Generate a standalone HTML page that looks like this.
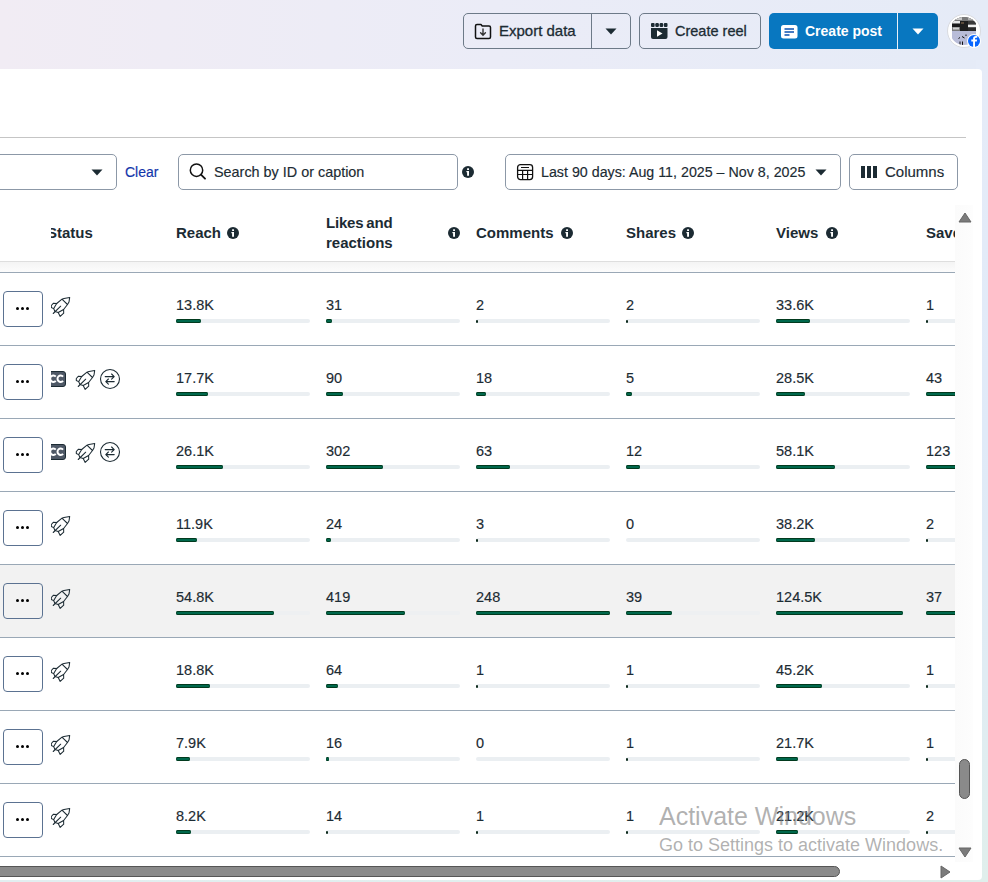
<!DOCTYPE html>
<html><head><meta charset="utf-8"><style>
*{box-sizing:border-box;margin:0;padding:0}
html,body{width:988px;height:882px;overflow:hidden}
body{position:relative;font-family:"Liberation Sans",sans-serif;color:#1c2b33;
background:linear-gradient(to right,#f1ecf4 0%,#ebecf7 50%,#e5ebf7 100%);}
.abs{position:absolute}
.ic{position:absolute;display:block}
.btn{position:absolute;top:13px;height:36px;border:1px solid #6d7a88;border-radius:5px;}
.btxt{position:absolute;font-size:14.5px;line-height:16px;white-space:nowrap}
.card{position:absolute;left:-20px;top:69px;width:1002px;height:811px;background:#fff;border-radius:4px;overflow:hidden}
.box{position:absolute;top:154px;height:36px;border:1px solid #8c98a7;border-radius:5px;background:#fff}
.ftxt{position:absolute;font-size:14px;line-height:16px;white-space:nowrap;-webkit-text-stroke:0.15px currentColor}
.hdr{position:absolute;font-size:15px;font-weight:700;line-height:20px;white-space:nowrap}
.tbl{position:absolute;left:0;top:195px;width:955px;height:667px;overflow:hidden}
.rowbg{position:absolute;left:0;width:955px;height:72px}
.hline{position:absolute;left:0;width:955px;height:1px;background:#9aa8b6}
.num{position:absolute;font-size:14.5px;line-height:16px;white-space:nowrap;-webkit-text-stroke:0.15px #1c2b33}
.trk{position:absolute;width:134px;height:4px;border-radius:2px;background:#ebeff2}
.hl .trk{background:#eceef0}
.fill{position:absolute;height:4px;border-radius:2px;background:#00684c;box-shadow:inset 0 1px 0 #023a1e,inset 0 -1px 0 #023a1e}
.stk{position:absolute;left:0;width:51px;height:72px;background:#fff}
.more{position:absolute;left:3px;width:40px;height:36px;border:1px solid #5b7291;border-radius:4px;}
.more i{position:absolute;top:15.4px;width:3.1px;height:3.1px;border-radius:50%;background:#000}
.more i:nth-child(1){left:12.4px}.more i:nth-child(2){left:17.4px}.more i:nth-child(3){left:22.4px}
.wm{position:absolute;color:rgba(125,125,125,0.6);white-space:nowrap}
</style></head><body>

<!-- top buttons -->
<div class="btn" style="left:463px;width:168px"></div>
<div class="abs" style="left:591px;top:13px;width:1px;height:36px;background:#6d7a88"></div>
<svg class="ic" width="18" height="17" viewBox="0 0 18 17" style="left:474px;top:23px"><path d="M1.5,3 Q1.5,1.5 3,1.5 H7 L8.2,3 H15 Q16.5,3 16.5,4.5 V14 Q16.5,15.5 15,15.5 H3 Q1.5,15.5 1.5,14 Z" fill="none" stroke="#111" stroke-width="1.5" stroke-linejoin="round"/><path d="M9,6 V12 M6.6,9.8 L9,12.2 L11.4,9.8" fill="none" stroke="#333" stroke-width="1.4" stroke-linecap="round"/></svg>
<div class="btxt" style="left:499px;top:23px;font-size:15px;-webkit-text-stroke:0.3px #1c2b33">Export data</div>
<svg class="ic" width="12" height="7" viewBox="0 0 12 7" style="left:605px;top:28px"><path d="M0.5,0.5 H11.5 L6,6.5 Z" fill="#1c2b33"/></svg>

<div class="btn" style="left:639px;width:122px"></div>
<svg class="ic" width="17" height="17" viewBox="0 0 17 17" style="left:651px;top:22px"><rect x="0" y="1" width="3.6" height="3.9" rx="1" fill="#1c2b33"/><rect x="4.3" y="1" width="3.6" height="3.9" rx="1.2" fill="#1c2b33"/><rect x="8.6" y="1" width="3.6" height="3.9" rx="1.2" fill="#1c2b33"/><rect x="12.9" y="1" width="3.6" height="3.9" rx="1" fill="#1c2b33"/><path d="M0,6 H16.5 V15 Q16.5,17 14.5,17 H2 Q0,17 0,15 Z" fill="#1c2b33"/><path d="M6,8.2 L11.5,11.5 L6,14.8 Z" fill="#fff"/></svg>
<div class="btxt" style="left:675px;top:23px;-webkit-text-stroke:0.3px #1c2b33">Create reel</div>

<div class="abs" style="left:769px;top:13px;width:169px;height:36px;background:#0877c0;border-radius:5px"></div>
<div class="abs" style="left:897px;top:13px;width:1px;height:36px;background:#e8f0f8"></div>
<svg class="ic" width="17" height="14" viewBox="0 0 17 14" style="left:781px;top:24.5px"><rect x="0" y="0" width="16.5" height="13.5" rx="2.5" fill="#fff"/><path d="M3.5,4 H13 M3.5,7 H13 M3.5,10 H8.5" stroke="#0a50b0" stroke-width="1.3"/></svg>
<div class="btxt" style="left:805px;top:23px;color:#fff;font-weight:700;font-size:14px">Create post</div>
<svg class="ic" width="12" height="7" viewBox="0 0 12 7" style="left:912px;top:28px"><path d="M0.5,0.5 H11.5 L6,6.5 Z" fill="#fff"/></svg>

<!-- avatar -->
<svg class="ic" width="36" height="36" viewBox="0 0 36 36" style="left:946px;top:13px">
<defs><clipPath id="av"><circle cx="18" cy="18" r="14"/></clipPath></defs>
<circle cx="18" cy="18" r="16.5" fill="#fff" stroke="#d9dbe0" stroke-width="1"/>
<g clip-path="url(#av)">
<rect x="0" y="0" width="36" height="36" fill="#fff"/>
<rect x="6" y="4" width="24" height="14" fill="#6a6a6a"/>
<rect x="6" y="4" width="24" height="14" fill="#7a7a7a"/><rect x="6" y="8" width="8" height="2" fill="#e8e8e8"/><rect x="6" y="11" width="8" height="3" fill="#1a1a1a"/><rect x="7" y="14.5" width="6" height="2" fill="#d0d0d0"/><rect x="14" y="8" width="8" height="10" fill="#1e1e1e"/><rect x="15" y="9" width="3" height="2" fill="#5a4a3a"/><rect x="22" y="4" width="8" height="3" fill="#b0b0b0"/><rect x="22" y="8" width="8" height="3" fill="#3a3a3a"/><rect x="22" y="12" width="8" height="2" fill="#f0f0f0"/><rect x="22" y="14.5" width="8" height="3.5" fill="#2a2a2a"/><rect x="10" y="4" width="6" height="3" fill="#c8c8c8"/>
<rect x="6" y="18" width="24" height="16" fill="#b8bcd8"/>
<path d="M12.5,25.5 l1.5,-1 M16,23.5 l2.5,1.5 M20,21.5 v1.5 M14,28.5 v3.5 M16.5,28.5 v3.5 M12,33 h1 M20,33 h1" stroke="#111" stroke-width="1"/>
</g>
<circle cx="28" cy="28" r="7" fill="#fff"/>
<circle cx="28" cy="28" r="6" fill="#0866ff"/>
<path d="M29,34 V28.5 H30.8 L31.1,26.6 H29 V25.6 Q29,24.8 30,24.8 H31.2 V23.1 Q30.5,23 29.7,23 Q27.1,23 27.1,25.5 V26.6 H25.3 V28.5 H27.1 V34 Z" fill="#fff"/>
</svg>

<!-- card -->
<div class="abs" style="left:976px;top:60px;width:12px;height:822px;background:linear-gradient(to bottom,#e6ecf8 0%,#e0eaf8 45%,#e0ecf3 75%,#e0efec 100%)"></div>
<div class="abs" style="left:0;top:876px;width:988px;height:6px;background:linear-gradient(to right,#e2eef0,#e0efec)"></div>
<div class="card"></div>
<div class="abs" style="left:0;top:137px;width:966px;height:1px;background:#c5c5c5"></div>

<!-- filter row -->
<div class="box" style="left:-10px;width:127px"></div>
<svg class="ic" width="12" height="7" viewBox="0 0 12 7" style="left:91px;top:169px"><path d="M0.5,0.5 H11.5 L6,6.5 Z" fill="#1c2b33"/></svg>
<div class="ftxt" style="left:125px;top:164px;color:#1236aa">Clear</div>
<div class="box" style="left:178px;width:280px"></div>
<svg class="ic" width="18" height="18" viewBox="0 0 18 18" style="left:188px;top:162px"><circle cx="8.5" cy="8.2" r="6.2" fill="none" stroke="#111" stroke-width="1.5"/><path d="M13,12.7 L17,16.7" stroke="#111" stroke-width="1.8" stroke-linecap="round"/></svg>
<div class="ftxt" style="left:214px;top:164px;font-size:14.4px">Search by ID or caption</div>
<svg class="ic" width="12" height="12" viewBox="0 0 12 12" style="left:462px;top:166px"><circle cx="6" cy="6" r="6" fill="#1c2b33"/><rect x="5.1" y="2.3" width="1.9" height="1.7" fill="#fff"/><path d="M4.4,5 H7 V9.7 H5.1 V6.3 H4.4 Z" fill="#fff"/></svg>
<div class="box" style="left:505px;width:336px"></div>
<svg class="ic" width="18" height="18" viewBox="0 0 18 18" style="left:516px;top:163px"><rect x="1.6" y="1.6" width="15" height="15" rx="2.8" fill="none" stroke="#111" stroke-width="1.3"/><path d="M1.6,7.3 H16.6 M1.6,11.5 H16.6 M6.6,7.3 V16.6 M11.6,7.3 V16.6 M5,4.5 H13" stroke="#111" stroke-width="1.2"/></svg>
<div class="ftxt" style="left:541px;top:164px;font-size:14.25px">Last 90 days: Aug 11, 2025 – Nov 8, 2025</div>
<svg class="ic" width="12" height="7" viewBox="0 0 12 7" style="left:815px;top:169px"><path d="M0.5,0.5 H11.5 L6,6.5 Z" fill="#1c2b33"/></svg>
<div class="box" style="left:849px;width:109px"></div>
<div class="abs" style="left:861px;top:166px;width:4px;height:12px;background:#1c2b33"></div>
<div class="abs" style="left:867px;top:166px;width:4px;height:12px;background:#1c2b33"></div>
<div class="abs" style="left:873px;top:166px;width:4px;height:12px;background:#1c2b33"></div>
<div class="ftxt" style="left:885px;top:164px;font-size:15px">Columns</div>

<!-- table -->
<div class="abs" style="left:0;top:195px;width:955px;height:667px;overflow:hidden">
 <div style="position:absolute;left:0;top:-195px;width:955px;height:882px">
 <div class="hdr" style="left:47px;top:223px">Status</div><div class="abs" style="left:0;top:200px;width:51px;height:61px;background:#fff"></div>
 <div class="hdr" style="left:176px;top:223px">Reach</div><svg class="ic" width="12" height="12" viewBox="0 0 12 12" style="left:227px;top:227px"><circle cx="6" cy="6" r="6" fill="#1c2b33"/><rect x="5.1" y="2.3" width="1.9" height="1.7" fill="#fff"/><path d="M4.4,5 H7 V9.7 H5.1 V6.3 H4.4 Z" fill="#fff"/></svg>
 <div class="hdr" style="left:326px;top:213px;word-spacing:-1px;letter-spacing:-0.2px">Likes and</div>
 <div class="hdr" style="left:326px;top:233px">reactions</div><svg class="ic" width="12" height="12" viewBox="0 0 12 12" style="left:448px;top:227px"><circle cx="6" cy="6" r="6" fill="#1c2b33"/><rect x="5.1" y="2.3" width="1.9" height="1.7" fill="#fff"/><path d="M4.4,5 H7 V9.7 H5.1 V6.3 H4.4 Z" fill="#fff"/></svg>
 <div class="hdr" style="left:476px;top:223px">Comments</div><svg class="ic" width="12" height="12" viewBox="0 0 12 12" style="left:561px;top:227px"><circle cx="6" cy="6" r="6" fill="#1c2b33"/><rect x="5.1" y="2.3" width="1.9" height="1.7" fill="#fff"/><path d="M4.4,5 H7 V9.7 H5.1 V6.3 H4.4 Z" fill="#fff"/></svg>
 <div class="hdr" style="left:626px;top:223px">Shares</div><svg class="ic" width="12" height="12" viewBox="0 0 12 12" style="left:682px;top:227px"><circle cx="6" cy="6" r="6" fill="#1c2b33"/><rect x="5.1" y="2.3" width="1.9" height="1.7" fill="#fff"/><path d="M4.4,5 H7 V9.7 H5.1 V6.3 H4.4 Z" fill="#fff"/></svg>
 <div class="hdr" style="left:776px;top:223px">Views</div><svg class="ic" width="12" height="12" viewBox="0 0 12 12" style="left:826px;top:227px"><circle cx="6" cy="6" r="6" fill="#1c2b33"/><rect x="5.1" y="2.3" width="1.9" height="1.7" fill="#fff"/><path d="M4.4,5 H7 V9.7 H5.1 V6.3 H4.4 Z" fill="#fff"/></svg>
 <div class="hdr" style="left:926px;top:223px">Saves</div>
 <div class="abs" style="left:0;top:261px;width:955px;height:1px;background:#dedede"></div>
 <div class="abs" style="left:0;top:262px;width:955px;height:10px;background:linear-gradient(#f4f4f4,#fcfcfc)"></div>
 <div class="hline" style="top:272px"></div>
 <div class="rowbg" style="top:273px;"></div>
<div class="hline" style="top:345px"></div>
<svg class="ic" width="22" height="22" viewBox="0 0 22 22" style="left:50px;top:296px"><g fill="none" stroke="#1c2b33" stroke-width="1.05" stroke-linejoin="round" stroke-linecap="round"><path d="M19.7,1.4 L14,2.4 L12,3.2 L6.7,7.5 L3.5,7.2 L1.3,9.5 L1.3,11.5 L3.6,12.6 L5,15.5 L8.2,16.5 L10.2,20.4 L13.7,17.2 L13.6,13.5 L17.5,8.5 L19,6 Z"/><path d="M12.2,3.4 L17.5,8.5 M6.7,7.5 L3.7,12.5 M8.2,16.5 L13.6,13.5 M10.7,10.2 L3.2,17.5"/></g></svg>
<div class="num" style="left:176px;top:297px">13.8K</div>
<div class="trk" style="left:176px;top:319px;"></div><div class="fill" style="left:176px;top:319px;width:24.7px"></div>
<div class="num" style="left:326px;top:297px">31</div>
<div class="trk" style="left:326px;top:319px;"></div><div class="fill" style="left:326px;top:319px;width:5.8px"></div>
<div class="num" style="left:476px;top:297px">2</div>
<div class="trk" style="left:476px;top:319px;"></div><div class="abs" style="left:476px;top:319.5px;width:1.8px;height:3px;border-radius:1px;background:#0d2a1c"></div>
<div class="num" style="left:626px;top:297px">2</div>
<div class="trk" style="left:626px;top:319px;"></div><div class="abs" style="left:626px;top:319.5px;width:1.8px;height:3px;border-radius:1px;background:#0d2a1c"></div>
<div class="num" style="left:776px;top:297px">33.6K</div>
<div class="trk" style="left:776px;top:319px;"></div><div class="fill" style="left:776px;top:319px;width:34.3px"></div>
<div class="num" style="left:926px;top:297px">1</div>
<div class="trk" style="left:926px;top:319px;"></div><div class="abs" style="left:926px;top:319.5px;width:1.8px;height:3px;border-radius:1px;background:#0d2a1c"></div>
<div class="rowbg" style="top:346px;"></div>
<div class="hline" style="top:418px"></div>
<svg class="ic" width="20" height="16" viewBox="0 0 20 16" style="left:46px;top:371px"><rect x="0.5" y="0.5" width="19" height="15" rx="2.5" fill="#4e5866" stroke="#1c2b33" stroke-width="1"/><path d="M9.78,5.56 A3.2,3.2 0 1 0 9.78,9.84 M17.08,5.56 A3.2,3.2 0 1 0 17.08,9.84" fill="none" stroke="#fff" stroke-width="2"/></svg>
<svg class="ic" width="22" height="22" viewBox="0 0 22 22" style="left:75px;top:369px"><g fill="none" stroke="#1c2b33" stroke-width="1.05" stroke-linejoin="round" stroke-linecap="round"><path d="M19.7,1.4 L14,2.4 L12,3.2 L6.7,7.5 L3.5,7.2 L1.3,9.5 L1.3,11.5 L3.6,12.6 L5,15.5 L8.2,16.5 L10.2,20.4 L13.7,17.2 L13.6,13.5 L17.5,8.5 L19,6 Z"/><path d="M12.2,3.4 L17.5,8.5 M6.7,7.5 L3.7,12.5 M8.2,16.5 L13.6,13.5 M10.7,10.2 L3.2,17.5"/></g></svg>
<svg class="ic" width="22" height="22" viewBox="0 0 22 22" style="left:99px;top:368px"><circle cx="11" cy="11" r="9.5" fill="none" stroke="#1c2b33" stroke-width="1.1"/><path d="M6.2,8.6 H15.2 M12.6,6 L15.2,8.6 L12.6,11.2 M15.2,13.6 H6.8 M9.4,11 L6.8,13.6 L9.4,16.2" fill="none" stroke="#1c2b33" stroke-width="1.1" stroke-linecap="round" stroke-linejoin="round"/></svg>
<div class="num" style="left:176px;top:370px">17.7K</div>
<div class="trk" style="left:176px;top:392px;"></div><div class="fill" style="left:176px;top:392px;width:31.7px"></div>
<div class="num" style="left:326px;top:370px">90</div>
<div class="trk" style="left:326px;top:392px;"></div><div class="fill" style="left:326px;top:392px;width:17.0px"></div>
<div class="num" style="left:476px;top:370px">18</div>
<div class="trk" style="left:476px;top:392px;"></div><div class="fill" style="left:476px;top:392px;width:9.7px"></div>
<div class="num" style="left:626px;top:370px">5</div>
<div class="trk" style="left:626px;top:392px;"></div><div class="fill" style="left:626px;top:392px;width:5.9px"></div>
<div class="num" style="left:776px;top:370px">28.5K</div>
<div class="trk" style="left:776px;top:392px;"></div><div class="fill" style="left:776px;top:392px;width:29.1px"></div>
<div class="num" style="left:926px;top:370px">43</div>
<div class="trk" style="left:926px;top:392px;"></div><div class="fill" style="left:926px;top:392px;width:43.0px"></div>
<div class="rowbg" style="top:419px;"></div>
<div class="hline" style="top:491px"></div>
<svg class="ic" width="20" height="16" viewBox="0 0 20 16" style="left:46px;top:444px"><rect x="0.5" y="0.5" width="19" height="15" rx="2.5" fill="#4e5866" stroke="#1c2b33" stroke-width="1"/><path d="M9.78,5.56 A3.2,3.2 0 1 0 9.78,9.84 M17.08,5.56 A3.2,3.2 0 1 0 17.08,9.84" fill="none" stroke="#fff" stroke-width="2"/></svg>
<svg class="ic" width="22" height="22" viewBox="0 0 22 22" style="left:75px;top:442px"><g fill="none" stroke="#1c2b33" stroke-width="1.05" stroke-linejoin="round" stroke-linecap="round"><path d="M19.7,1.4 L14,2.4 L12,3.2 L6.7,7.5 L3.5,7.2 L1.3,9.5 L1.3,11.5 L3.6,12.6 L5,15.5 L8.2,16.5 L10.2,20.4 L13.7,17.2 L13.6,13.5 L17.5,8.5 L19,6 Z"/><path d="M12.2,3.4 L17.5,8.5 M6.7,7.5 L3.7,12.5 M8.2,16.5 L13.6,13.5 M10.7,10.2 L3.2,17.5"/></g></svg>
<svg class="ic" width="22" height="22" viewBox="0 0 22 22" style="left:99px;top:441px"><circle cx="11" cy="11" r="9.5" fill="none" stroke="#1c2b33" stroke-width="1.1"/><path d="M6.2,8.6 H15.2 M12.6,6 L15.2,8.6 L12.6,11.2 M15.2,13.6 H6.8 M9.4,11 L6.8,13.6 L9.4,16.2" fill="none" stroke="#1c2b33" stroke-width="1.1" stroke-linecap="round" stroke-linejoin="round"/></svg>
<div class="num" style="left:176px;top:443px">26.1K</div>
<div class="trk" style="left:176px;top:465px;"></div><div class="fill" style="left:176px;top:465px;width:46.7px"></div>
<div class="num" style="left:326px;top:443px">302</div>
<div class="trk" style="left:326px;top:465px;"></div><div class="fill" style="left:326px;top:465px;width:56.9px"></div>
<div class="num" style="left:476px;top:443px">63</div>
<div class="trk" style="left:476px;top:465px;"></div><div class="fill" style="left:476px;top:465px;width:34.0px"></div>
<div class="num" style="left:626px;top:443px">12</div>
<div class="trk" style="left:626px;top:465px;"></div><div class="fill" style="left:626px;top:465px;width:14.2px"></div>
<div class="num" style="left:776px;top:443px">58.1K</div>
<div class="trk" style="left:776px;top:465px;"></div><div class="fill" style="left:776px;top:465px;width:59.3px"></div>
<div class="num" style="left:926px;top:443px">123</div>
<div class="trk" style="left:926px;top:465px;"></div><div class="fill" style="left:926px;top:465px;width:123.0px"></div>
<div class="rowbg" style="top:492px;"></div>
<div class="hline" style="top:564px"></div>
<svg class="ic" width="22" height="22" viewBox="0 0 22 22" style="left:50px;top:515px"><g fill="none" stroke="#1c2b33" stroke-width="1.05" stroke-linejoin="round" stroke-linecap="round"><path d="M19.7,1.4 L14,2.4 L12,3.2 L6.7,7.5 L3.5,7.2 L1.3,9.5 L1.3,11.5 L3.6,12.6 L5,15.5 L8.2,16.5 L10.2,20.4 L13.7,17.2 L13.6,13.5 L17.5,8.5 L19,6 Z"/><path d="M12.2,3.4 L17.5,8.5 M6.7,7.5 L3.7,12.5 M8.2,16.5 L13.6,13.5 M10.7,10.2 L3.2,17.5"/></g></svg>
<div class="num" style="left:176px;top:516px">11.9K</div>
<div class="trk" style="left:176px;top:538px;"></div><div class="fill" style="left:176px;top:538px;width:21.3px"></div>
<div class="num" style="left:326px;top:516px">24</div>
<div class="trk" style="left:326px;top:538px;"></div><div class="fill" style="left:326px;top:538px;width:4.5px"></div>
<div class="num" style="left:476px;top:516px">3</div>
<div class="trk" style="left:476px;top:538px;"></div><div class="abs" style="left:476px;top:538.5px;width:1.8px;height:3px;border-radius:1px;background:#0d2a1c"></div>
<div class="num" style="left:626px;top:516px">0</div>
<div class="trk" style="left:626px;top:538px;"></div>
<div class="num" style="left:776px;top:516px">38.2K</div>
<div class="trk" style="left:776px;top:538px;"></div><div class="fill" style="left:776px;top:538px;width:39.0px"></div>
<div class="num" style="left:926px;top:516px">2</div>
<div class="trk" style="left:926px;top:538px;"></div><div class="abs" style="left:926px;top:538.5px;width:1.8px;height:3px;border-radius:1px;background:#0d2a1c"></div>
<div class="rowbg" style="top:565px;background:#f2f2f2;"></div>
<div class="hline" style="top:637px"></div>
<svg class="ic" width="22" height="22" viewBox="0 0 22 22" style="left:50px;top:588px"><g fill="none" stroke="#1c2b33" stroke-width="1.05" stroke-linejoin="round" stroke-linecap="round"><path d="M19.7,1.4 L14,2.4 L12,3.2 L6.7,7.5 L3.5,7.2 L1.3,9.5 L1.3,11.5 L3.6,12.6 L5,15.5 L8.2,16.5 L10.2,20.4 L13.7,17.2 L13.6,13.5 L17.5,8.5 L19,6 Z"/><path d="M12.2,3.4 L17.5,8.5 M6.7,7.5 L3.7,12.5 M8.2,16.5 L13.6,13.5 M10.7,10.2 L3.2,17.5"/></g></svg>
<div class="num" style="left:176px;top:589px">54.8K</div>
<div class="trk" style="left:176px;top:611px;background:#eef0f2;"></div><div class="fill" style="left:176px;top:611px;width:98.1px"></div>
<div class="num" style="left:326px;top:589px">419</div>
<div class="trk" style="left:326px;top:611px;background:#eef0f2;"></div><div class="fill" style="left:326px;top:611px;width:79.0px"></div>
<div class="num" style="left:476px;top:589px">248</div>
<div class="trk" style="left:476px;top:611px;background:#eef0f2;"></div><div class="fill" style="left:476px;top:611px;width:134.0px"></div>
<div class="num" style="left:626px;top:589px">39</div>
<div class="trk" style="left:626px;top:611px;background:#eef0f2;"></div><div class="fill" style="left:626px;top:611px;width:46.0px"></div>
<div class="num" style="left:776px;top:589px">124.5K</div>
<div class="trk" style="left:776px;top:611px;background:#eef0f2;"></div><div class="fill" style="left:776px;top:611px;width:127.0px"></div>
<div class="num" style="left:926px;top:589px">37</div>
<div class="trk" style="left:926px;top:611px;background:#eef0f2;"></div><div class="fill" style="left:926px;top:611px;width:37.0px"></div>
<div class="rowbg" style="top:638px;"></div>
<div class="hline" style="top:710px"></div>
<svg class="ic" width="22" height="22" viewBox="0 0 22 22" style="left:50px;top:661px"><g fill="none" stroke="#1c2b33" stroke-width="1.05" stroke-linejoin="round" stroke-linecap="round"><path d="M19.7,1.4 L14,2.4 L12,3.2 L6.7,7.5 L3.5,7.2 L1.3,9.5 L1.3,11.5 L3.6,12.6 L5,15.5 L8.2,16.5 L10.2,20.4 L13.7,17.2 L13.6,13.5 L17.5,8.5 L19,6 Z"/><path d="M12.2,3.4 L17.5,8.5 M6.7,7.5 L3.7,12.5 M8.2,16.5 L13.6,13.5 M10.7,10.2 L3.2,17.5"/></g></svg>
<div class="num" style="left:176px;top:662px">18.8K</div>
<div class="trk" style="left:176px;top:684px;"></div><div class="fill" style="left:176px;top:684px;width:33.7px"></div>
<div class="num" style="left:326px;top:662px">64</div>
<div class="trk" style="left:326px;top:684px;"></div><div class="fill" style="left:326px;top:684px;width:12.1px"></div>
<div class="num" style="left:476px;top:662px">1</div>
<div class="trk" style="left:476px;top:684px;"></div><div class="abs" style="left:476px;top:684.5px;width:1.8px;height:3px;border-radius:1px;background:#0d2a1c"></div>
<div class="num" style="left:626px;top:662px">1</div>
<div class="trk" style="left:626px;top:684px;"></div><div class="abs" style="left:626px;top:684.5px;width:1.8px;height:3px;border-radius:1px;background:#0d2a1c"></div>
<div class="num" style="left:776px;top:662px">45.2K</div>
<div class="trk" style="left:776px;top:684px;"></div><div class="fill" style="left:776px;top:684px;width:46.1px"></div>
<div class="num" style="left:926px;top:662px">1</div>
<div class="trk" style="left:926px;top:684px;"></div><div class="abs" style="left:926px;top:684.5px;width:1.8px;height:3px;border-radius:1px;background:#0d2a1c"></div>
<div class="rowbg" style="top:711px;"></div>
<div class="hline" style="top:783px"></div>
<svg class="ic" width="22" height="22" viewBox="0 0 22 22" style="left:50px;top:734px"><g fill="none" stroke="#1c2b33" stroke-width="1.05" stroke-linejoin="round" stroke-linecap="round"><path d="M19.7,1.4 L14,2.4 L12,3.2 L6.7,7.5 L3.5,7.2 L1.3,9.5 L1.3,11.5 L3.6,12.6 L5,15.5 L8.2,16.5 L10.2,20.4 L13.7,17.2 L13.6,13.5 L17.5,8.5 L19,6 Z"/><path d="M12.2,3.4 L17.5,8.5 M6.7,7.5 L3.7,12.5 M8.2,16.5 L13.6,13.5 M10.7,10.2 L3.2,17.5"/></g></svg>
<div class="num" style="left:176px;top:735px">7.9K</div>
<div class="trk" style="left:176px;top:757px;"></div><div class="fill" style="left:176px;top:757px;width:14.1px"></div>
<div class="num" style="left:326px;top:735px">16</div>
<div class="trk" style="left:326px;top:757px;"></div><div class="fill" style="left:326px;top:757px;width:3.0px"></div>
<div class="num" style="left:476px;top:735px">0</div>
<div class="trk" style="left:476px;top:757px;"></div>
<div class="num" style="left:626px;top:735px">1</div>
<div class="trk" style="left:626px;top:757px;"></div><div class="abs" style="left:626px;top:757.5px;width:1.8px;height:3px;border-radius:1px;background:#0d2a1c"></div>
<div class="num" style="left:776px;top:735px">21.7K</div>
<div class="trk" style="left:776px;top:757px;"></div><div class="fill" style="left:776px;top:757px;width:22.1px"></div>
<div class="num" style="left:926px;top:735px">1</div>
<div class="trk" style="left:926px;top:757px;"></div><div class="abs" style="left:926px;top:757.5px;width:1.8px;height:3px;border-radius:1px;background:#0d2a1c"></div>
<div class="rowbg" style="top:784px;"></div>
<div class="hline" style="top:856px"></div>
<svg class="ic" width="22" height="22" viewBox="0 0 22 22" style="left:50px;top:807px"><g fill="none" stroke="#1c2b33" stroke-width="1.05" stroke-linejoin="round" stroke-linecap="round"><path d="M19.7,1.4 L14,2.4 L12,3.2 L6.7,7.5 L3.5,7.2 L1.3,9.5 L1.3,11.5 L3.6,12.6 L5,15.5 L8.2,16.5 L10.2,20.4 L13.7,17.2 L13.6,13.5 L17.5,8.5 L19,6 Z"/><path d="M12.2,3.4 L17.5,8.5 M6.7,7.5 L3.7,12.5 M8.2,16.5 L13.6,13.5 M10.7,10.2 L3.2,17.5"/></g></svg>
<div class="num" style="left:176px;top:808px">8.2K</div>
<div class="trk" style="left:176px;top:830px;"></div><div class="fill" style="left:176px;top:830px;width:14.7px"></div>
<div class="num" style="left:326px;top:808px">14</div>
<div class="trk" style="left:326px;top:830px;"></div><div class="abs" style="left:326px;top:830.5px;width:1.8px;height:3px;border-radius:1px;background:#0d2a1c"></div>
<div class="num" style="left:476px;top:808px">1</div>
<div class="trk" style="left:476px;top:830px;"></div><div class="abs" style="left:476px;top:830.5px;width:1.8px;height:3px;border-radius:1px;background:#0d2a1c"></div>
<div class="num" style="left:626px;top:808px">1</div>
<div class="trk" style="left:626px;top:830px;"></div><div class="abs" style="left:626px;top:830.5px;width:1.8px;height:3px;border-radius:1px;background:#0d2a1c"></div>
<div class="num" style="left:776px;top:808px">21.2K</div>
<div class="trk" style="left:776px;top:830px;"></div><div class="fill" style="left:776px;top:830px;width:21.6px"></div>
<div class="num" style="left:926px;top:808px">2</div>
<div class="trk" style="left:926px;top:830px;"></div><div class="abs" style="left:926px;top:830.5px;width:1.8px;height:3px;border-radius:1px;background:#0d2a1c"></div>
 <div class="stk" style="top:273px;"><div class="more" style="top:18px"><i></i><i></i><i></i></div></div>
<div class="stk" style="top:346px;"><div class="more" style="top:18px"><i></i><i></i><i></i></div></div>
<div class="stk" style="top:419px;"><div class="more" style="top:18px"><i></i><i></i><i></i></div></div>
<div class="stk" style="top:492px;"><div class="more" style="top:18px"><i></i><i></i><i></i></div></div>
<div class="stk" style="top:565px;background:#f2f2f2;"><div class="more" style="top:18px"><i></i><i></i><i></i></div></div>
<div class="stk" style="top:638px;"><div class="more" style="top:18px"><i></i><i></i><i></i></div></div>
<div class="stk" style="top:711px;"><div class="more" style="top:18px"><i></i><i></i><i></i></div></div>
<div class="stk" style="top:784px;"><div class="more" style="top:18px"><i></i><i></i><i></i></div></div>
 </div>
</div>

<!-- scrollbars -->
<div class="abs" style="left:955px;top:205px;width:18px;height:657px;background:linear-gradient(to right,#fbfbfb,#fdfdfd)"></div>
<svg class="ic" width="14" height="11" viewBox="0 0 14 11" style="left:957.5px;top:211.5px"><path d="M7,1 L13,10 H1 Z" fill="#7b7b7b" stroke="#666" stroke-width="1" stroke-linejoin="round"/></svg>
<div class="abs" style="left:959px;top:759px;width:11px;height:40px;border-radius:6px;background:#8a8a8a;border:1px solid #555"></div>
<svg class="ic" width="14" height="11" viewBox="0 0 14 11" style="left:957.5px;top:846.5px"><path d="M1,1 H13 L7,10 Z" fill="#7b7b7b" stroke="#666" stroke-width="1" stroke-linejoin="round"/></svg>
<div class="abs" style="left:-20px;top:866px;width:860px;height:11px;border-radius:6px;background:#8a8a8a;border:1px solid #555"></div>
<svg class="ic" width="11" height="14" viewBox="0 0 11 14" style="left:939.5px;top:865px"><path d="M1,1 L10,7 L1,13 Z" fill="#7b7b7b" stroke="#666" stroke-width="1" stroke-linejoin="round"/></svg>

<!-- watermark -->
<div class="wm" style="left:659px;top:801.5px;font-size:25px;line-height:28px">Activate Windows</div>
<div class="wm" style="left:659px;top:835px;font-size:18px;line-height:20px">Go to Settings to activate Windows.</div>
</body></html>
